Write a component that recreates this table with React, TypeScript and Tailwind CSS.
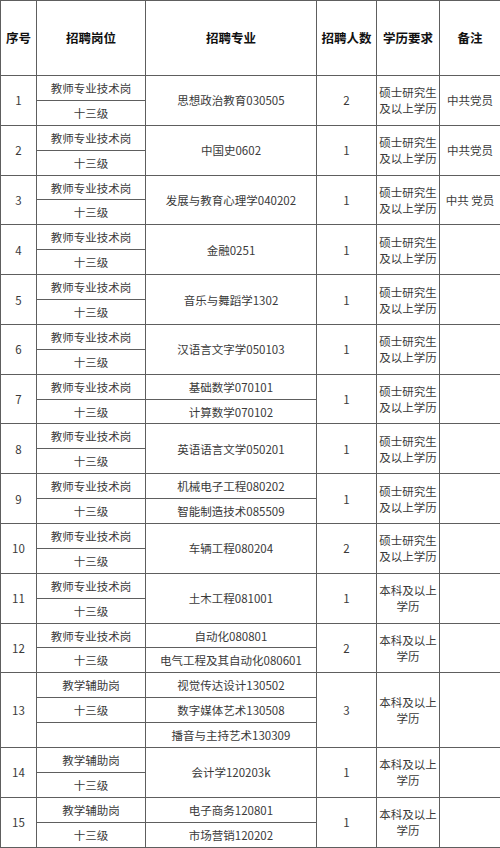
const FONT = { fontFamily: '"Noto Sans CJK SC", "Noto Sans", sans-serif' };

type Row = {
  no: number;
  post: string[];
  majors: string[];
  count: number;
  edu: "master" | "bachelor";
  note?: string;
};

const T = "教师专业技术岗";
const A = "教学辅助岗";
const L = "十三级";

const rows: Row[] = [
  { no: 1, post: [T, L], majors: ["思想政治教育030505"], count: 2, edu: "master", note: "中共党员" },
  { no: 2, post: [T, L], majors: ["中国史0602"], count: 1, edu: "master", note: "中共党员" },
  { no: 3, post: [T, L], majors: ["发展与教育心理学040202"], count: 1, edu: "master", note: "中共 党员" },
  { no: 4, post: [T, L], majors: ["金融0251"], count: 1, edu: "master" },
  { no: 5, post: [T, L], majors: ["音乐与舞蹈学1302"], count: 1, edu: "master" },
  { no: 6, post: [T, L], majors: ["汉语言文字学050103"], count: 1, edu: "master" },
  { no: 7, post: [T, L], majors: ["基础数学070101", "计算数学070102"], count: 1, edu: "master" },
  { no: 8, post: [T, L], majors: ["英语语言文学050201"], count: 1, edu: "master" },
  { no: 9, post: [T, L], majors: ["机械电子工程080202", "智能制造技术085509"], count: 1, edu: "master" },
  { no: 10, post: [T, L], majors: ["车辆工程080204"], count: 2, edu: "master" },
  { no: 11, post: [T, L], majors: ["土木工程081001"], count: 1, edu: "bachelor" },
  { no: 12, post: [T, L], majors: ["自动化080801", "电气工程及其自动化080601"], count: 2, edu: "bachelor" },
  { no: 13, post: [A, L, ""], majors: ["视觉传达设计130502", "数字媒体艺术130508", "播音与主持艺术130309"], count: 3, edu: "bachelor" },
  { no: 14, post: [A, L], majors: ["会计学120203k"], count: 1, edu: "bachelor" },
  { no: 15, post: [A, L], majors: ["电子商务120801", "市场营销120202"], count: 1, edu: "bachelor" },
];

const cell = "border border-[#5e5e5e] text-center align-middle p-0";

function Edu({ kind }: { kind: Row["edu"] }) {
  return kind === "master" ? (
    <>硕士研究生<br />及以上学历</>
  ) : (
    <>本科及以上<br />学历</>
  );
}

export default function App() {
  return (
    <div className="w-[500px] h-[848px] bg-white overflow-hidden" style={FONT}>
      <table className="w-[500px] table-fixed border-collapse text-[11.5px] leading-[16px] text-[#3a3a3a]">
        <colgroup>
          <col className="w-[36px]" />
          <col className="w-[109px]" />
          <col className="w-[171px]" />
          <col className="w-[60px]" />
          <col className="w-[63px]" />
          <col className="w-[61px]" />
        </colgroup>
        <thead>
          <tr className="h-[75px] text-[12.5px] font-bold text-[#111]">
            <th className={cell}>序号</th>
            <th className={cell}>招聘岗位</th>
            <th className={cell}>招聘专业</th>
            <th className={cell}>招聘人数</th>
            <th className={cell}>学历要求</th>
            <th className={cell}>备注</th>
          </tr>
        </thead>
        <tbody>
          {rows.flatMap((r) => {
            const n = r.post.length;
            return r.post.map((p, i) => {
              const majorSpan = r.majors.length === 1 ? n : 1;
              const showMajor = r.majors.length === 1 ? i === 0 : i < r.majors.length;
              return (
                <tr key={`${r.no}-${i}`} className="h-[24.9px]">
                  {i === 0 && (
                    <td className={cell} rowSpan={n}>
                      {r.no}
                    </td>
                  )}
                  <td className={cell}>{p}</td>
                  {showMajor && (
                    <td className={cell} rowSpan={majorSpan}>
                      {r.majors.length === 1 ? r.majors[0] : r.majors[i]}
                    </td>
                  )}
                  {i === 0 && (
                    <>
                      <td className={cell} rowSpan={n}>
                        {r.count}
                      </td>
                      <td className={cell} rowSpan={n}>
                        <Edu kind={r.edu} />
                      </td>
                      <td className={cell} rowSpan={n}>
                        {r.note}
                      </td>
                    </>
                  )}
                </tr>
              );
            });
          })}
        </tbody>
      </table>
    </div>
  );
}
